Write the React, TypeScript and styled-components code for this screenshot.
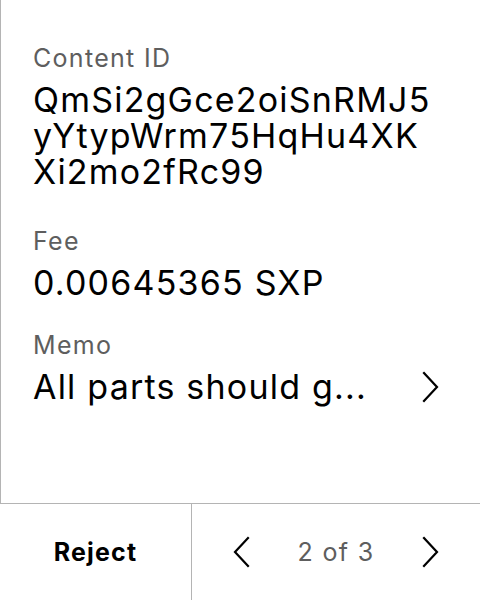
import React from "react";
import styled, { createGlobalStyle } from "styled-components";

const Global = createGlobalStyle`
  html, body { margin: 0; padding: 0; background: #ffffff; }
  body { font-family: Inter, "Noto Sans", sans-serif; color: #000; }
`;

const Screen = styled.div`
  width: 480px;
  height: 600px;
  display: flex;
  flex-direction: column;
  box-sizing: border-box;
`;

const Body = styled.div`
  flex: 1;
  border-left: 1px solid #b4b4b4;
  padding: 42px 32px 0 32px;
  display: flex;
  flex-direction: column;
`;

const Field = styled.div<{ $top: number }>`
  display: flex;
  flex-direction: column;
  gap: 8px;
  margin-top: ${(p) => p.$top}px;
`;

const Label = styled.div`
  font-size: 25px;
  line-height: 32px;
  letter-spacing: 1.3px;
  color: #5e5e5e;
`;

const Value = styled.div`
  font-size: 34px;
  line-height: 36px;
  letter-spacing: 1.2px;
  color: #000;
  white-space: nowrap;
`;

const ValueRow = styled.div`
  display: flex;
  align-items: center;
  justify-content: space-between;
  padding-right: 9px;
`;

const Footer = styled.div`
  height: 96px;
  border-top: 1px solid #b4b4b4;
  display: grid;
  grid-template-columns: 192px 1fr;
`;

const RejectButton = styled.div`
  display: flex;
  align-items: center;
  justify-content: center;
  border-right: 1px solid #b4b4b4;
  font-size: 25px;
  font-weight: 700;
  letter-spacing: 1.2px;
`;

const Pager = styled.div`
  display: flex;
  align-items: center;
  justify-content: space-between;
  padding: 0 41px 0 41px;
`;

const PageText = styled.div`
  font-size: 25px;
  letter-spacing: 1.3px;
  color: #5e5e5e;
`;

const Chevron = ({ dir }: { dir: "left" | "right" }) => (
  <svg width="18" height="32" viewBox="0 0 18 32" fill="none">
    <path
      d={dir === "right" ? "M3 2 L16 16 L3 30" : "M15 2 L2 16 L15 30"}
      stroke="#000"
      strokeWidth="2.2"
      strokeLinecap="square"
      strokeLinejoin="miter"
    />
  </svg>
);

export default function App() {
  return (
    <>
      <Global />
      <Screen>
        <Body>
          <Field $top={0}>
            <Label>Content ID</Label>
            <Value>
              QmSi2gGce2oiSnRMJ5
              <br />
              yYtypWrm75HqHu4XK
              <br />
              Xi2mo2fRc99
            </Value>
          </Field>
          <Field $top={35}>
            <Label>Fee</Label>
            <Value>0.00645365 SXP</Value>
          </Field>
          <Field $top={28}>
            <Label>Memo</Label>
            <ValueRow>
              <Value>All parts should g...</Value>
              <Chevron dir="right" />
            </ValueRow>
          </Field>
        </Body>
        <Footer>
          <RejectButton>Reject</RejectButton>
          <Pager>
            <Chevron dir="left" />
            <PageText>2 of 3</PageText>
            <Chevron dir="right" />
          </Pager>
        </Footer>
      </Screen>
    </>
  );
}
